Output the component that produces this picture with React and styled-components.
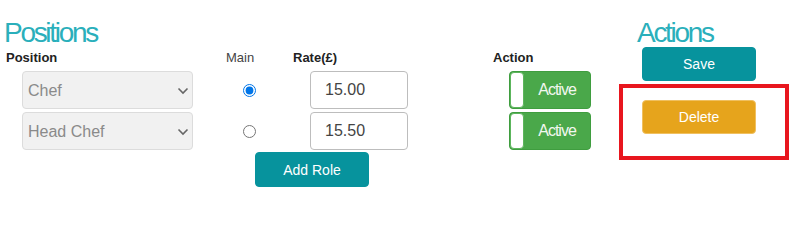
import React from 'react'
import styled, { createGlobalStyle } from 'styled-components'

const GlobalStyle = createGlobalStyle`
  body {
    margin: 0;
    background: #ffffff;
    font-family: "Liberation Sans", Arial, sans-serif;
    color: #222;
  }
`

const Page = styled.div`
  display: grid;
  grid-template-columns: 619px 170px;
  padding-top: 18px;
  height: 225px;
`

const Title = styled.h2`
  margin: 0 0 0 ${props => props.$indent}px;
  font-size: 28px;
  line-height: 29px;
  font-weight: 400;
  letter-spacing: -2.3px;
  color: #2aafbb;
`

const Section = styled.section`
  display: flex;
  flex-direction: column;
  padding-left: ${props => props.$pad || 0}px;
`

const Table = styled.div`
  display: grid;
  grid-template-columns: 209px 78px 200px 107px;
  row-gap: 3px;
  margin-top: 3px;
`

const HeadCell = styled.div`
  font-size: 13px;
  line-height: 16px;
  height: 18px;
  font-weight: ${props => (props.$bold ? 700 : 400)};
  color: ${props => (props.$bold ? '#222' : '#444')};
  padding-left: ${props => props.$pad || 0}px;
`

const Cell = styled.div`
  display: flex;
  align-items: center;
  height: 38px;
  padding-left: ${props => props.$pad || 0}px;
`

const SelectWrap = styled.div`
  position: relative;
  width: 171px;
  height: 38px;
`

const Select = styled.select`
  appearance: none;
  width: 100%;
  height: 100%;
  box-sizing: border-box;
  padding: 0 0 0 5px;
  border: 1px solid #dcdcdc;
  border-radius: 4px;
  background: #f1f1f1;
  color: #8a8a8a;
  font-family: "Liberation Sans", Arial, sans-serif;
  font-size: 16px;
  opacity: 1;
`

const Chevron = styled.svg`
  position: absolute;
  right: 4px;
  top: 16px;
  pointer-events: none;
`

const Radio = styled.input`
  width: 13px;
  height: 13px;
  margin: 0;
  accent-color: #0075e8;
`

const RateInput = styled.input`
  width: 98px;
  height: 38px;
  box-sizing: border-box;
  padding: 0 0 0 14px;
  border: 1px solid #bdbdbd;
  border-radius: 4px;
  font-family: "Liberation Sans", Arial, sans-serif;
  font-size: 16px;
  color: #444;
  outline: none;
`

const Toggle = styled.div`
  display: flex;
  width: 82px;
  height: 38px;
  box-sizing: border-box;
  border: 1px solid #3f9d3f;
  border-radius: 4px;
  background: #4aa84a;
  overflow: hidden;
`

const Knob = styled.span`
  width: 14px;
  height: 100%;
  box-sizing: border-box;
  background: #ffffff;
  border-radius: 4px;
  border: 1px solid #5cb55c;
`

const ToggleLabel = styled.span`
  flex: 1;
  display: flex;
  align-items: center;
  justify-content: center;
  color: #f2f7f0;
  font-size: 16px;
  letter-spacing: -1px;
`

const Button = styled.button`
  width: 114px;
  height: ${props => props.$h || 34}px;
  border: 1px solid ${props => props.$border};
  border-radius: 4px;
  background: ${props => props.$bg};
  color: #ffffff;
  font-family: "Liberation Sans", Arial, sans-serif;
  font-size: 14px;
  padding: 0;
  margin-left: ${props => props.$left || 0}px;
  margin-top: ${props => props.$top || 0}px;
`

const Highlight = styled.div`
  width: 170px;
  height: 76px;
  box-sizing: border-box;
  border: 4px solid #e8161e;
  margin-top: 3px;
  padding: 12px 0 0 19px;
`

const roles = [
  { name: 'Chef', rate: '15.00', main: true },
  { name: 'Head Chef', rate: '15.50', main: false },
]

function ChevronIcon() {
  return (
    <Chevron width="12" height="8" viewBox="0 0 12 8">
      <polyline points="1.5,1.5 6,6 10.5,1.5" fill="none" stroke="#666" strokeWidth="1.6" />
    </Chevron>
  )
}

export default function App() {
  return (
    <>
      <GlobalStyle />
      <Page>
        <Section $pad={6}>
          <Title $indent={-2}>Positions</Title>
          <Table>
            <HeadCell $bold>Position</HeadCell>
            <HeadCell $pad={11}>Main</HeadCell>
            <HeadCell $bold>Rate(£)</HeadCell>
            <HeadCell $bold>Action</HeadCell>
            {roles.map(role => (
              <React.Fragment key={role.name}>
                <Cell $pad={16}>
                  <SelectWrap>
                    <Select disabled defaultValue={role.name}>
                      <option>{role.name}</option>
                    </Select>
                    <ChevronIcon />
                  </SelectWrap>
                </Cell>
                <Cell $pad={28}>
                  <Radio type="radio" name="main" defaultChecked={role.main} />
                </Cell>
                <Cell $pad={17}>
                  <RateInput defaultValue={role.rate} />
                </Cell>
                <Cell $pad={16}>
                  <Toggle>
                    <Knob />
                    <ToggleLabel>Active</ToggleLabel>
                  </Toggle>
                </Cell>
              </React.Fragment>
            ))}
          </Table>
          <Button $bg="#07939d" $border="#07939d" $h={35} $left={249} $top={2}>Add Role</Button>
        </Section>
        <Section>
          <Title $indent={18}>Actions</Title>
          <Button $bg="#07939d" $border="#07939d" $left={23}>Save</Button>
          <Highlight>
            <Button $bg="#e6a41c" $border="#f0c060">Delete</Button>
          </Highlight>
        </Section>
      </Page>
    </>
  )
}
